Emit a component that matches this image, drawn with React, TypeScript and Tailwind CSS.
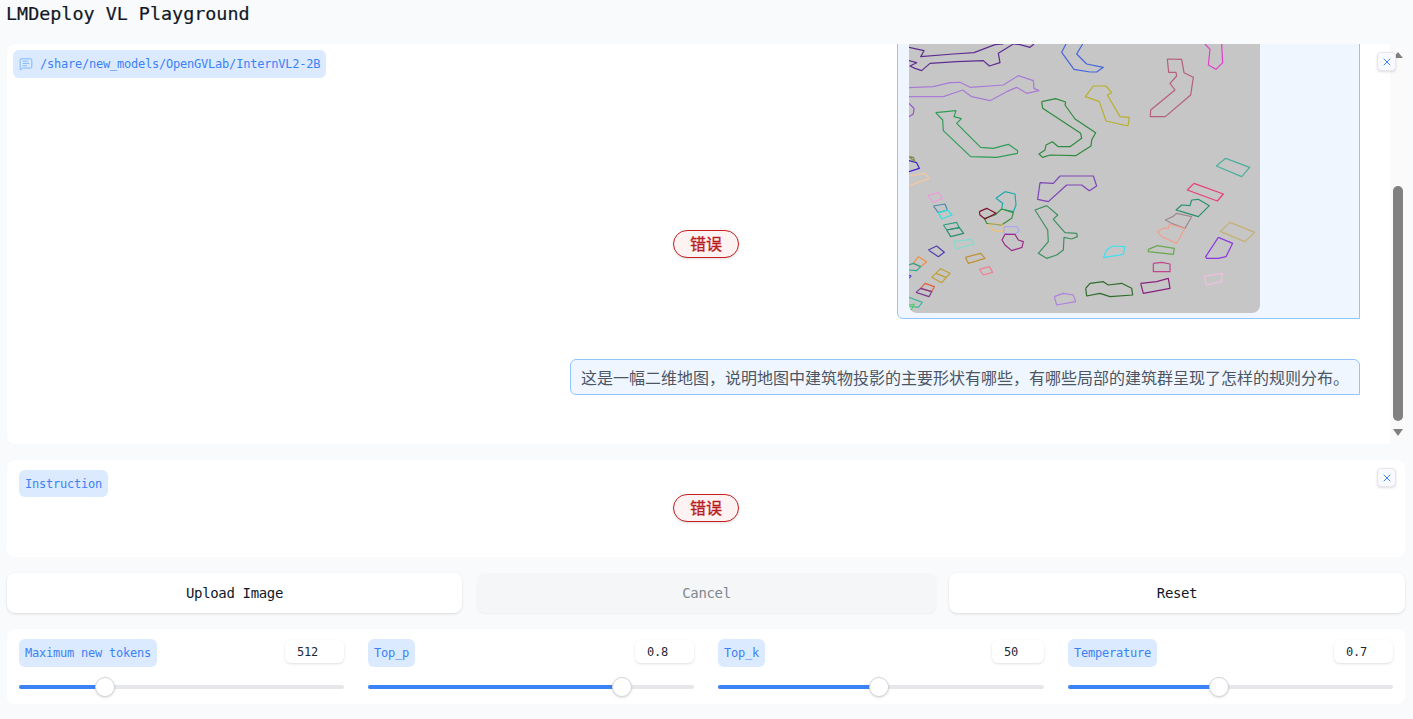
import React from "react";
import { MessageSquareText, X } from "lucide-react";

const mono = "font-['DejaVu_Sans_Mono','Liberation_Mono',monospace]";
const cjk = "font-['Noto_Sans_CJK_SC','Noto_Sans',sans-serif]";

const shapes: [string, string][] = [
  ["57,22 102,32 92,50 190,42 252,38 315,14 340,12", "#5e2d91"],
  ["370,12 325,40 330,68 298,78 280,62 200,65 120,70 95,92 75,85 60,78 80,68 57,62", "#5e2d91"],
  ["370,12 390,14 420,22 432,12", "#5e2d91"],
  ["57,143 130,140 180,128 210,127 240,142 340,135 385,107 430,122 432,145 447,152 410,160 380,142 350,155 300,182 245,170 218,150 160,170 57,170", "#a87bd6"],
  ["57,190 72,205 70,222 57,230", "#9355c9"],
  ["137,218 198,212 192,230 214,236 200,250 272,322 310,325 355,313 383,332 382,340 320,352 242,350 160,272 158,240", "#2f9e57"],
  ["455,185 497,176 527,186 525,195 555,237 617,278 605,300 603,318 557,347 480,345 458,352 447,342 465,330 468,315 487,305 505,320 540,320 575,295 572,280 458,205", "#2e8b3d"],
  ["528,12 515,37 552,88 600,96 620,96 640,82 590,72 560,42 578,12", "#4466dd"],
  ["610,138 648,138 665,158 652,165 690,230 718,232 714,258 648,243 628,185 586,170", "#b8b028"],
  ["832,57 875,58 882,98 910,112 902,165 826,230 781,230 782,210 855,150 840,130 860,108 858,97 836,97", "#b5607a"],
  ["945,12 960,28 955,75 978,88 998,68 995,12", "#e040c8"],
  ["1007,355 1079,382 1055,410 979,378", "#4eae9e"],
  ["912,430 1000,462 982,483 892,450", "#e83e74"],
  ["905,480 925,478 958,497 925,530 885,518 858,510 875,495 900,497", "#2a8f73"],
  ["860,520 905,530 885,565 845,550 826,540 848,530", "#a08a90"],
  ["838,552 884,566 860,610 815,590 802,575 820,565 835,565", "#f0a090"],
  ["1020,547 1094,577 1065,605 991,574", "#c4b070"],
  ["985,592 1028,610 1008,650 985,655 950,655 947,650", "#8a38e0"],
  ["775,628 802,617 853,625 850,643 775,635", "#69a84f"],
  ["668,618 705,620 700,643 640,653 650,630", "#40e0f0"],
  ["790,670 815,667 840,672 840,695 790,695", "#c0448f"],
  ["943,708 997,700 995,725 948,735", "#f0c0e0"],
  ["752,730 800,725 835,715 840,745 760,760", "#8a2080"],
  ["587,745 600,730 640,725 655,735 695,730 725,745 728,765 660,770 630,760 590,768", "#2f6b2a"],
  ["493,770 520,760 550,765 557,785 500,795", "#b080e0"],
  ["450,428 490,430 510,408 610,408 620,438 598,452 575,435 530,435 475,485 443,478", "#7e44b8"],
  ["470,497 503,525 490,538 525,578 560,580 562,590 545,597 522,592 520,630 500,645 470,655 445,640 475,605 473,570 435,510", "#3f9060"],
  ["345,455 375,462 378,495 370,515 335,507 338,490 318,475", "#1eaaaa"],
  ["335,507 370,518 365,535 335,555 290,550 283,535 315,525", "#3a8f3a"],
  ["268,515 290,505 318,520 285,537 270,525", "#801030"],
  ["295,552 335,552 345,575 310,572", "#f0c070"],
  ["342,560 380,560 388,572 375,583 342,580", "#aaaaee"],
  ["345,583 375,583 385,600 400,605 396,622 365,632 345,615 336,600", "#9a2a8a"],
  ["113,467 145,458 157,475 130,487", "#e8a0d8"],
  ["130,498 165,492 172,510 145,518", "#4a8ab0"],
  ["145,518 172,510 186,525 155,537", "#30e0e0"],
  ["160,555 200,547 208,563 170,570", "#30a080"],
  ["170,570 208,563 221,580 182,590", "#2a9070"],
  ["190,605 243,598 252,612 198,627", "#80dcd0"],
  ["115,630 140,618 163,637 145,650", "#5040b0"],
  ["226,652 272,640 285,655 235,670", "#c09030"],
  ["268,688 298,680 308,697 280,705", "#f08090"],
  ["70,670 85,650 110,665 92,680", "#f0904a"],
  ["57,675 70,670 92,680 80,692 57,690", "#30a890"],
  ["125,712 152,686 180,700 155,728", "#c0a030"],
  ["138,700 168,712", "#c0a030"],
  ["92,745 105,730 133,740 125,755", "#e06040"],
  ["78,757 92,745 125,755 117,770", "#7a3a90"],
  ["57,772 97,787 85,802 57,798", "#40b8a0"],
  ["57,795 73,792 65,808 57,808", "#50d060"],
  ["57,362 80,368 88,385 57,395", "#4020d0"],
  ["57,350 70,352 75,365", "#8a8a50"],
  ["57,408 105,400 117,415 57,438", "#f5c8a0"],
  ["57,705 63,708 57,714", "#6040e0"],
];

function closePath(p: string) {
  const pts = p.split(" ");
  const [fx, fy] = pts[0].split(",");
  const [lx, ly] = pts[pts.length - 1].split(",");
  if (pts.length < 3 || (fx === "57" && lx === "57") || fy === "12" || ly === "12") return p;
  return `${p} ${pts[0]}`;
}

function CloseBtn() {
  return (
    <div className="absolute right-[9px] top-[8px] z-10 flex h-[19px] w-[19px] items-center justify-center rounded-[4px] border border-[#e5e7eb] bg-[#f8faff] shadow-sm">
      <X size={12} strokeWidth={2} color="#3b82f6" />
    </div>
  );
}

function ErrorBadge() {
  return (
    <div className={`flex h-[28px] w-[66px] items-center justify-center rounded-full border border-[#c81e1e] bg-[#fef2f2] pb-[2px] text-[16px] font-normal text-[#b91c1c] shadow-sm [-webkit-text-stroke:0.3px] ${cjk}`}>
      错误
    </div>
  );
}

function Slider({ label, value, pct, inputW }: { label: string; value: string; pct: number; inputW: string }) {
  return (
    <div className="flex flex-col">
      <div className="flex items-start justify-between">
        <span className={`flex h-[28px] items-center rounded-[6px] bg-[#dbeafe] px-[6px] text-[12px] tracking-[-0.22px] text-[#3b82f6] ${mono}`}>{label}</span>
        <span className={`mt-px flex h-[23px] items-center rounded-[6px] bg-white pl-[12px] text-[12px] tracking-[-0.22px] text-gray-800 shadow-sm ${inputW} ${mono}`}>{value}</span>
      </div>
      <div className="relative mt-[18px] h-[4px] rounded-full bg-[#e5e7eb]">
        <div className="h-full rounded-full bg-[#3b82f6]" style={{ width: `${pct}%` }} />
        <div className="absolute top-[-8px] ml-[-10px] h-[20px] w-[20px] rounded-full border border-[#d1d5db] bg-white shadow-sm" style={{ left: `${pct}%` }} />
      </div>
    </div>
  );
}

function Btn({ children, muted }: { children: React.ReactNode; muted?: boolean }) {
  return (
    <div className={`flex h-[40px] items-center justify-center rounded-[8px] text-[14px] tracking-[-0.35px] ${mono} ${muted ? "-mr-px ml-px bg-[#f5f6f8] text-[#808790] shadow-xs" : "bg-white text-gray-900 shadow-sm"}`}>
      {children}
    </div>
  );
}

export default function App() {
  return (
    <div className="flex h-[719px] flex-col overflow-hidden bg-[#f9fafb] pl-[7px] pr-[8px]">
      <h1 className={`-ml-px flex h-[44px] shrink-0 pt-[1px] text-[18.4px] leading-[26px] text-[#111827] [-webkit-text-stroke:0.2px] ${mono}`}>LMDeploy VL Playground</h1>

      <div className="relative flex h-[400px] shrink-0 overflow-hidden rounded-[8px] bg-white">
        <div className="absolute left-[6px] top-[6px] flex h-[28px] items-center gap-[7px] rounded-[6px] bg-[#dbeafe] px-[6px] text-[12px] tracking-[-0.22px] text-[#3b82f6]">
          <MessageSquareText size={14} strokeWidth={1.25} className="text-[#60a5fa]" />
          <span className={mono}>/share/new_models/OpenGVLab/InternVL2-2B</span>
        </div>
        <CloseBtn />
        <div className="flex min-w-0 flex-1 flex-col items-end justify-end gap-[40px] pb-[49px] pr-[30px]">
          <div className="w-[463px] shrink-0 rounded-bl-[6px] border border-[#93c5fd] bg-[#eff6ff] pb-[5px] pl-[11px] pt-[20px]">
            <svg viewBox="57 12 1053 807" className="block h-[269px] w-[351px] rounded-b-[8px] bg-[#c6c6c6]">
              {shapes.map(([p, c], i) => (
                <polyline key={i} points={closePath(p)} fill="none" stroke={c} strokeWidth={3.6} strokeLinejoin="round" />
              ))}
            </svg>
          </div>
          <div className={`flex h-[36px] w-[790px] shrink-0 items-center rounded-[6px] rounded-br-none border border-[#93c5fd] bg-[#eff6ff] pb-px pl-[10px] text-[16px] font-normal text-[#4b5563] ${cjk}`}>
            这是一幅二维地图，说明地图中建筑物投影的主要形状有哪些，有哪些局部的建筑群呈现了怎样的规则分布。
          </div>
        </div>
        <div className="flex w-[15px] shrink-0 flex-col items-center bg-[#fafafa]">
          <div className="mt-[8px] h-0 w-0 border-x-[5px] border-b-[6px] border-x-transparent border-b-[#808080]" />
          <div className="mt-[128px] h-[235px] w-[10px] rounded-full bg-[#808080]" />
          <div className="mt-[8px] h-0 w-0 border-x-[5px] border-t-[7px] border-x-transparent border-t-[#808080]" />
        </div>
        <div className="pointer-events-none absolute inset-0 flex items-center justify-center">
          <ErrorBadge />
        </div>
      </div>

      <div className="relative mt-[16px] h-[97px] shrink-0 rounded-[8px] bg-white px-[12px] pt-[10px]">
        <span className={`flex h-[27px] w-fit items-center rounded-[6px] bg-[#dbeafe] px-[6px] text-[12px] tracking-[-0.22px] text-[#3b82f6] ${mono}`}>Instruction</span>
        <CloseBtn />
        <div className="absolute inset-x-0 top-[34px] flex justify-center">
          <ErrorBadge />
        </div>
      </div>

      <div className="mt-[16px] grid shrink-0 grid-cols-[455px_459px_456px] gap-[14px]">
        <Btn>Upload Image</Btn>
        <Btn muted>Cancel</Btn>
        <Btn>Reset</Btn>
      </div>

      <div className="mt-[16px] grid h-[75px] shrink-0 grid-cols-[325px_326px_326px_325px] gap-[24px] rounded-[8px] bg-white px-[12px] pt-[10px]">
        <Slider label="Maximum new tokens" value="512" pct={26.46} inputW="w-[59px]" />
        <Slider label="Top_p" value="0.8" pct={77.9} inputW="w-[59px]" />
        <Slider label="Top_k" value="50" pct={49.4} inputW="w-[52px]" />
        <Slider label="Temperature" value="0.7" pct={46.46} inputW="w-[59px]" />
      </div>
    </div>
  );
}
